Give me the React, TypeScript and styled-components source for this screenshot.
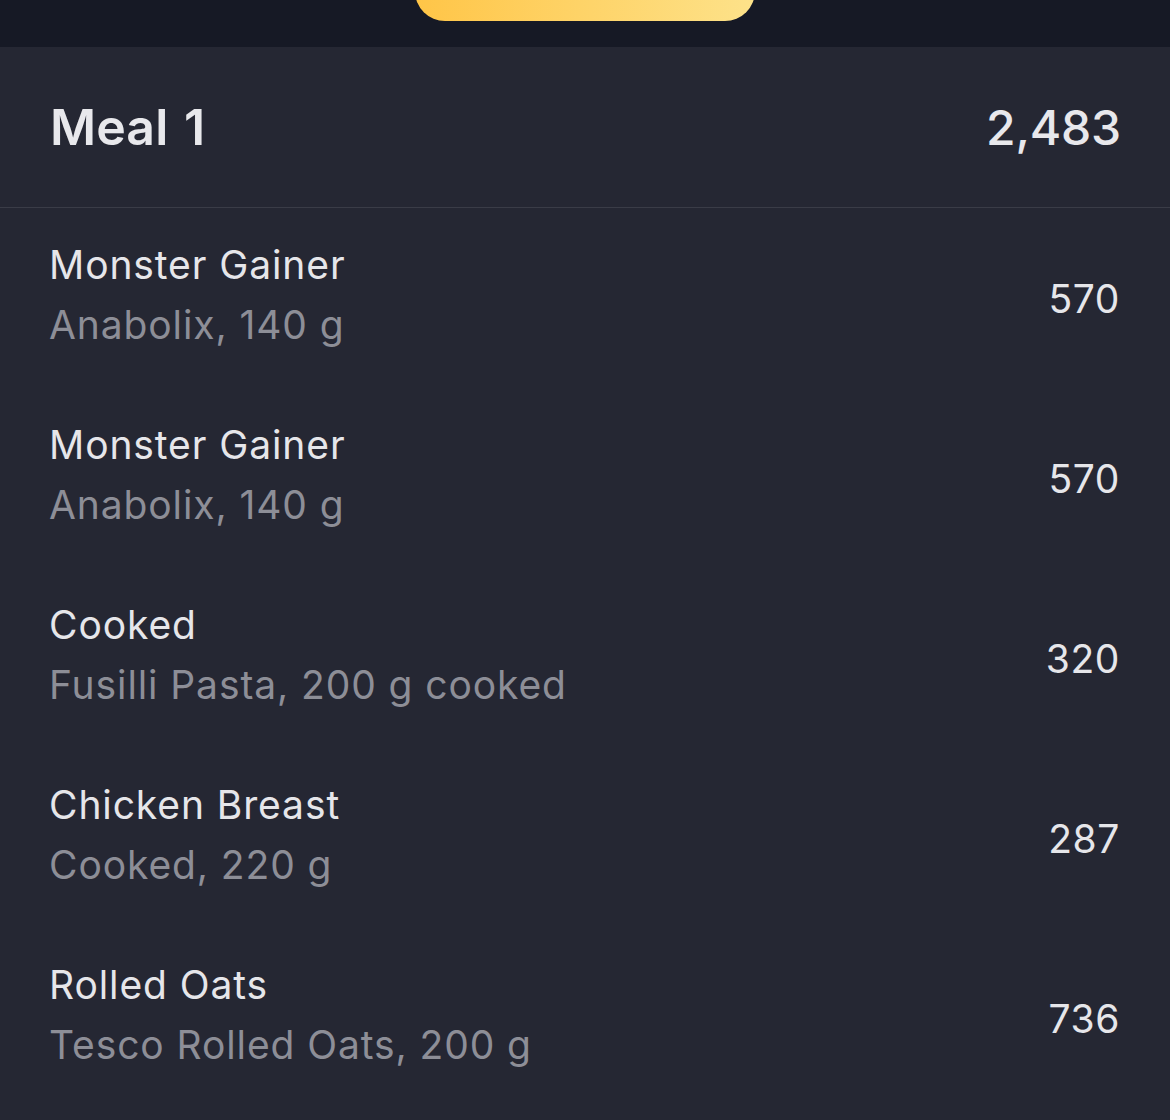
import styled, { createGlobalStyle } from "styled-components"

const GlobalStyle = createGlobalStyle`
	html, body {
		margin: 0;
		padding: 0;
		background: #252733;
	}
	body {
		font-family: Inter, "Noto Sans", sans-serif;
		-webkit-font-smoothing: antialiased;
	}
`

type Food = {
	name: string
	detail: string
	kcal: number
}

const foods: Food[] = [
	{ name: "Monster Gainer", detail: "Anabolix, 140 g", kcal: 570 },
	{ name: "Monster Gainer", detail: "Anabolix, 140 g", kcal: 570 },
	{ name: "Cooked", detail: "Fusilli Pasta, 200 g cooked", kcal: 320 },
	{ name: "Chicken Breast", detail: "Cooked, 220 g", kcal: 287 },
	{ name: "Rolled Oats", detail: "Tesco Rolled Oats, 200 g", kcal: 736 },
]

const App = () => {
	const total = foods.reduce((sum, f) => sum + f.kcal, 0)

	return (
		<Page>
			<GlobalStyle />
			<TopBar>
				<AddButton />
			</TopBar>

			<Panel>
				<MealHeader>
					<MealTitle>Meal 1</MealTitle>
					<MealTotal>{total.toLocaleString("en-US")}</MealTotal>
				</MealHeader>

				<List>
					{foods.map((food, i) => (
						<Row key={i}>
							<Info>
								<Name>{food.name}</Name>
								<Detail>{food.detail}</Detail>
							</Info>
							<Kcal>{food.kcal}</Kcal>
						</Row>
					))}
				</List>
			</Panel>
		</Page>
	)
}

export default App

const Page = styled.div`
	width: 1170px;
	height: 1120px;
	overflow: hidden;
	background: #252733;
`

const TopBar = styled.div`
	height: 47px;
	background: #161925;
	display: flex;
	justify-content: center;
	overflow: hidden;
`

const AddButton = styled.div`
	width: 340px;
	height: 60px;
	margin-top: -39px;
	border-radius: 32px;
	background: linear-gradient(90deg, #ffc547 0%, #fde28a 100%);
`

const Panel = styled.section`
	background: #252733;
`

const MealHeader = styled.header`
	height: 161px;
	box-sizing: border-box;
	padding: 0 49px 0 50px;
	display: flex;
	align-items: center;
	justify-content: space-between;
	border-bottom: 1px solid #3a3c47;
`

const MealTitle = styled.h2`
	margin: 0;
	font-size: 50px;
	font-weight: 600;
	color: #e8e8ec;
	letter-spacing: 0.1px;
	word-spacing: 3px;
`

const MealTotal = styled.span`
	font-size: 48px;
	font-weight: 500;
	color: #e8e8ec;
	letter-spacing: -0.2px;
`

const List = styled.div`
	display: flex;
	flex-direction: column;
`

const Row = styled.div`
	height: 180px;
	box-sizing: border-box;
	padding: 0 50px 0 49px;
	display: flex;
	align-items: center;
	justify-content: space-between;
`

const Info = styled.div`
	display: flex;
	flex-direction: column;
	padding-bottom: 6px;
`

const Name = styled.span`
	font-size: 39px;
	line-height: 60px;
	color: #e6e6ea;
	letter-spacing: 0.9px;
`

const Detail = styled(Name)`
	color: #8d8e97;
`

const Kcal = styled.span`
	font-size: 39px;
	color: #e6e6ea;
	letter-spacing: 0.6px;
`
